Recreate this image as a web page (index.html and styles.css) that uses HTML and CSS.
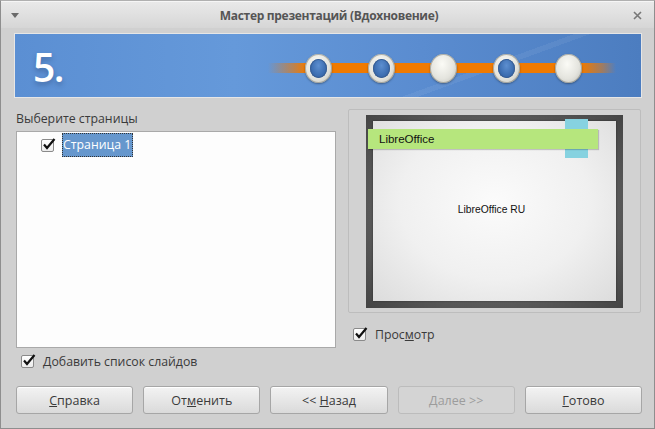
FILE: index.html
```html
<!DOCTYPE html>
<html lang="ru">
<head>
<meta charset="utf-8">
<link rel="stylesheet" href="styles.css">
</head>
<body>
<div class="window">
  <div class="titlebar">
    <span class="menu-arrow"></span>
    <span class="title">Мастер презентаций (Вдохновение)</span>
    <svg class="close" width="9" height="9" viewBox="0 0 9 9"><path d="M1 1L8 8M8 1L1 8" stroke="#777" stroke-width="1.6"/></svg>
  </div>
  <div class="content">
    <div class="banner">
      <div class="step">5.</div>
      <div class="track">
        <span class="dot active"></span>
        <span class="dot active"></span>
        <span class="dot"></span>
        <span class="dot active"></span>
        <span class="dot"></span>
      </div>
    </div>
    <div class="main">
      <div class="left">
        <div class="label">Выберите страницы</div>
        <div class="listbox">
          <div class="item">
            <span class="check"><svg width="16" height="14" viewBox="0 0 16 14"><path d="M3 7.5L6 11L13.5 2" fill="none" stroke="#111" stroke-width="2.2"/></svg></span>
            <span class="selected">Страница 1</span>
          </div>
        </div>
        <label class="cbrow">
          <span class="check"><svg width="16" height="14" viewBox="0 0 16 14"><path d="M3 7.5L6 11L13.5 2" fill="none" stroke="#111" stroke-width="2.2"/></svg></span>
          <span><u>Д</u>обавить список слайдов</span>
        </label>
      </div>
      <div class="right">
        <div class="preview">
          <div class="frame">
            <div class="slide">
              <div class="cyan"></div>
              <div class="greenbar">LibreOffice</div>
              <div class="slidetext">LibreOffice RU</div>
            </div>
          </div>
        </div>
        <label class="cbrow">
          <span class="check"><svg width="16" height="14" viewBox="0 0 16 14"><path d="M3 7.5L6 11L13.5 2" fill="none" stroke="#111" stroke-width="2.2"/></svg></span>
          <span>Прос<u>м</u>отр</span>
        </label>
      </div>
    </div>
    <div class="buttons">
      <button class="btn"><u>С</u>правка</button>
      <button class="btn">От<u>м</u>енить</button>
      <button class="btn">&lt;&lt; <u>Н</u>азад</button>
      <button class="btn disabled"><u>Д</u>алее &gt;&gt;</button>
      <button class="btn"><u>Г</u>отово</button>
    </div>
  </div>
</div>
</body>
</html>
```
FILE: styles.css
```css
* { box-sizing: border-box; }
html, body { margin: 0; padding: 0; }
body {
  width: 655px;
  height: 429px;
  overflow: hidden;
  font-family: "Open Sans", "DejaVu Sans", sans-serif;
  font-size: 12.3px;
  color: #3c3c3c;
  background: #cfcfcf;
}
.window {
  width: 655px;
  height: 429px;
  border: 1px solid #8e8e8e;
  border-top-color: #b0b0b0;
  background: #d0d0d0;
  display: flex;
  flex-direction: column;
}
.titlebar {
  height: 27px;
  flex: none;
  display: flex;
  align-items: center;
  padding: 0 12px 0 10px;
  background: linear-gradient(#e9e9e9, #d6d6d6);
  border-top: 1px solid #f6f6f6;
}
.menu-arrow {
  width: 0; height: 0;
  border-left: 4px solid transparent;
  border-right: 4px solid transparent;
  border-top: 5px solid #6a6a6a;
  margin-top: 1px;
}
.title {
  flex: 1;
  text-align: center;
  font-weight: bold;
  font-size: 12px;
  color: #555;
  letter-spacing: -0.3px;
  padding-left: 6px;
}
.close { flex: none; }

.content {
  flex: 1;
  display: flex;
  flex-direction: column;
  padding: 5px 12px 0 13px;
}
.banner {
  height: 65px;
  border: 1px solid #e6e6e6;
  background:
    linear-gradient(160deg, transparent 70%, rgba(255,255,255,0.06) 70%, rgba(255,255,255,0.06) 72%, transparent 72%),
    linear-gradient(90deg, #5b8fd3 0%, #6599da 35%, #5a8cd0 65%, #4c7dc0 100%);
  display: flex;
  align-items: center;
}
.step {
  color: #fff;
  font-family: "Open Sans", sans-serif;
  font-weight: 600;
  font-size: 39px;
  line-height: 1;
  margin-left: 18px;
  margin-top: 2px;
  text-shadow: 0 3px 5px rgba(30,50,90,0.35);
  letter-spacing: -1.5px;
}
.track {
  margin-left: auto;
  margin-right: 25px;
  width: 348px;
  height: 32px;
  margin-top: 5px;
  display: flex;
  justify-content: space-between;
  align-items: center;
  padding: 0 34px 0 37px;
  background: linear-gradient(90deg, rgba(240,120,0,0) 0%, rgba(240,120,0,0.6) 7%, #f07a00 11%, #f07a00 90%, rgba(240,120,0,0.5) 96%, rgba(240,120,0,0) 100%) center / 100% 10px no-repeat;
}
.dot {
  width: 27px;
  height: 29px;
  border-radius: 50%;
  background: radial-gradient(ellipse at 45% 35%, #fbfbf6 0%, #e4e4de 55%, #b8b8b0 100%);
  box-shadow: 0 1px 2px rgba(0,0,0,0.35), inset 0 0 0 1px rgba(120,120,110,0.5);
  position: relative;
}
.dot.active::after {
  content: "";
  position: absolute;
  left: 5px; top: 5px; right: 5px; bottom: 5px;
  border-radius: 50%;
  background: radial-gradient(ellipse at 50% 35%, #5d8fd0 0%, #3c6db0 60%, #2b5690 100%);
  box-shadow: inset 0 0 0 1px #3a5f94;
}

.main {
  flex: 1;
  display: flex;
  gap: 12px;
  margin-top: 11px;
}
.left {
  width: 320px;
  margin-left: 2px;
  display: flex;
  flex-direction: column;
}
.label {
  height: 22px;
  padding-top: 1px;
  color: #3a3a3a;
}
.listbox {
  height: 217px;
  background: #fdfdfd;
  border: 1px solid #a9a9a9;
  padding: 1px 0 0 24px;
}
.item {
  display: flex;
  align-items: center;
  height: 24px;
  gap: 8px;
}
.selected {
  background: #6697cd;
  color: #fff;
  padding: 0 2px 0 1px;
  height: 24px;
  line-height: 23px;
  outline: 1px dotted #333;
  outline-offset: -1px;
}
.check {
  position: relative;
  width: 13px;
  height: 13px;
  flex: none;
  border: 1px solid #8a8a8a;
  border-radius: 2px;
  background: linear-gradient(#fff, #ececec);
}
.check svg {
  position: absolute;
  left: -1px;
  top: -3px;
}
.cbrow {
  display: flex;
  align-items: center;
  gap: 9px;
  height: 24px;
  padding-left: 5px;
  margin-top: 1px;
  color: #3a3a3a;
}
.right {
  width: 293px;
  display: flex;
  flex-direction: column;
}
.preview {
  height: 204px;
  border: 1px solid #bdbdbd;
  background: #d2d2d2;
  padding: 5px 17px 4px 17px;
  border-radius: 2px;
}
.frame {
  height: 100%;
  background: radial-gradient(ellipse at center, #5e5e5e 60%, #444 100%);
  padding: 6px 7px 7px 7px;
}
.slide {
  position: relative;
  height: 100%;
  background: radial-gradient(ellipse at 50% 45%, #fbfbfb 0%, #f0f0f0 55%, #dcdcdc 100%);
  box-shadow: 0 0 2px rgba(0,0,0,0.4);
  display: flex;
  align-items: center;
  justify-content: center;
}
.cyan {
  position: absolute;
  left: 192px;
  top: -2px;
  width: 23px;
  height: 39px;
  background: #86d2e0;
}
.greenbar {
  position: absolute;
  left: -5px;
  top: 8px;
  width: 230px;
  height: 20px;
  background: #b6e67d;
  box-shadow: 1px 1px 1px rgba(0,0,0,0.2);
  font-family: "Liberation Sans", Arial, sans-serif;
  font-size: 11.5px;
  color: #111;
  padding-left: 11px;
  line-height: 20px;
}
.slidetext {
  font-family: "Liberation Sans", Arial, sans-serif;
  font-size: 10.3px;
  color: #111;
  margin-top: -3px;
  margin-left: -6px;
}
.right .cbrow {
  margin-top: 9px;
  padding-left: 5px;
}
.buttons {
  display: flex;
  gap: 10px;
  margin-top: 13px;
  margin-bottom: 15px;
  padding-left: 2px;
}
.btn {
  width: 118px;
  height: 28px;
  font-family: "Open Sans", "DejaVu Sans", sans-serif;
  font-size: 12.5px;
  color: #3a3a3a;
  background: linear-gradient(#f3f3f3, #dadada);
  border: 1px solid #a6a6a6;
  border-radius: 3px;
  padding: 0;
  box-shadow: inset 0 1px 0 #fff;
}
.btn.disabled {
  background: #d4d4d4;
  color: #9c9c9c;
  border-color: #bcbcbc;
  box-shadow: none;
}
```
